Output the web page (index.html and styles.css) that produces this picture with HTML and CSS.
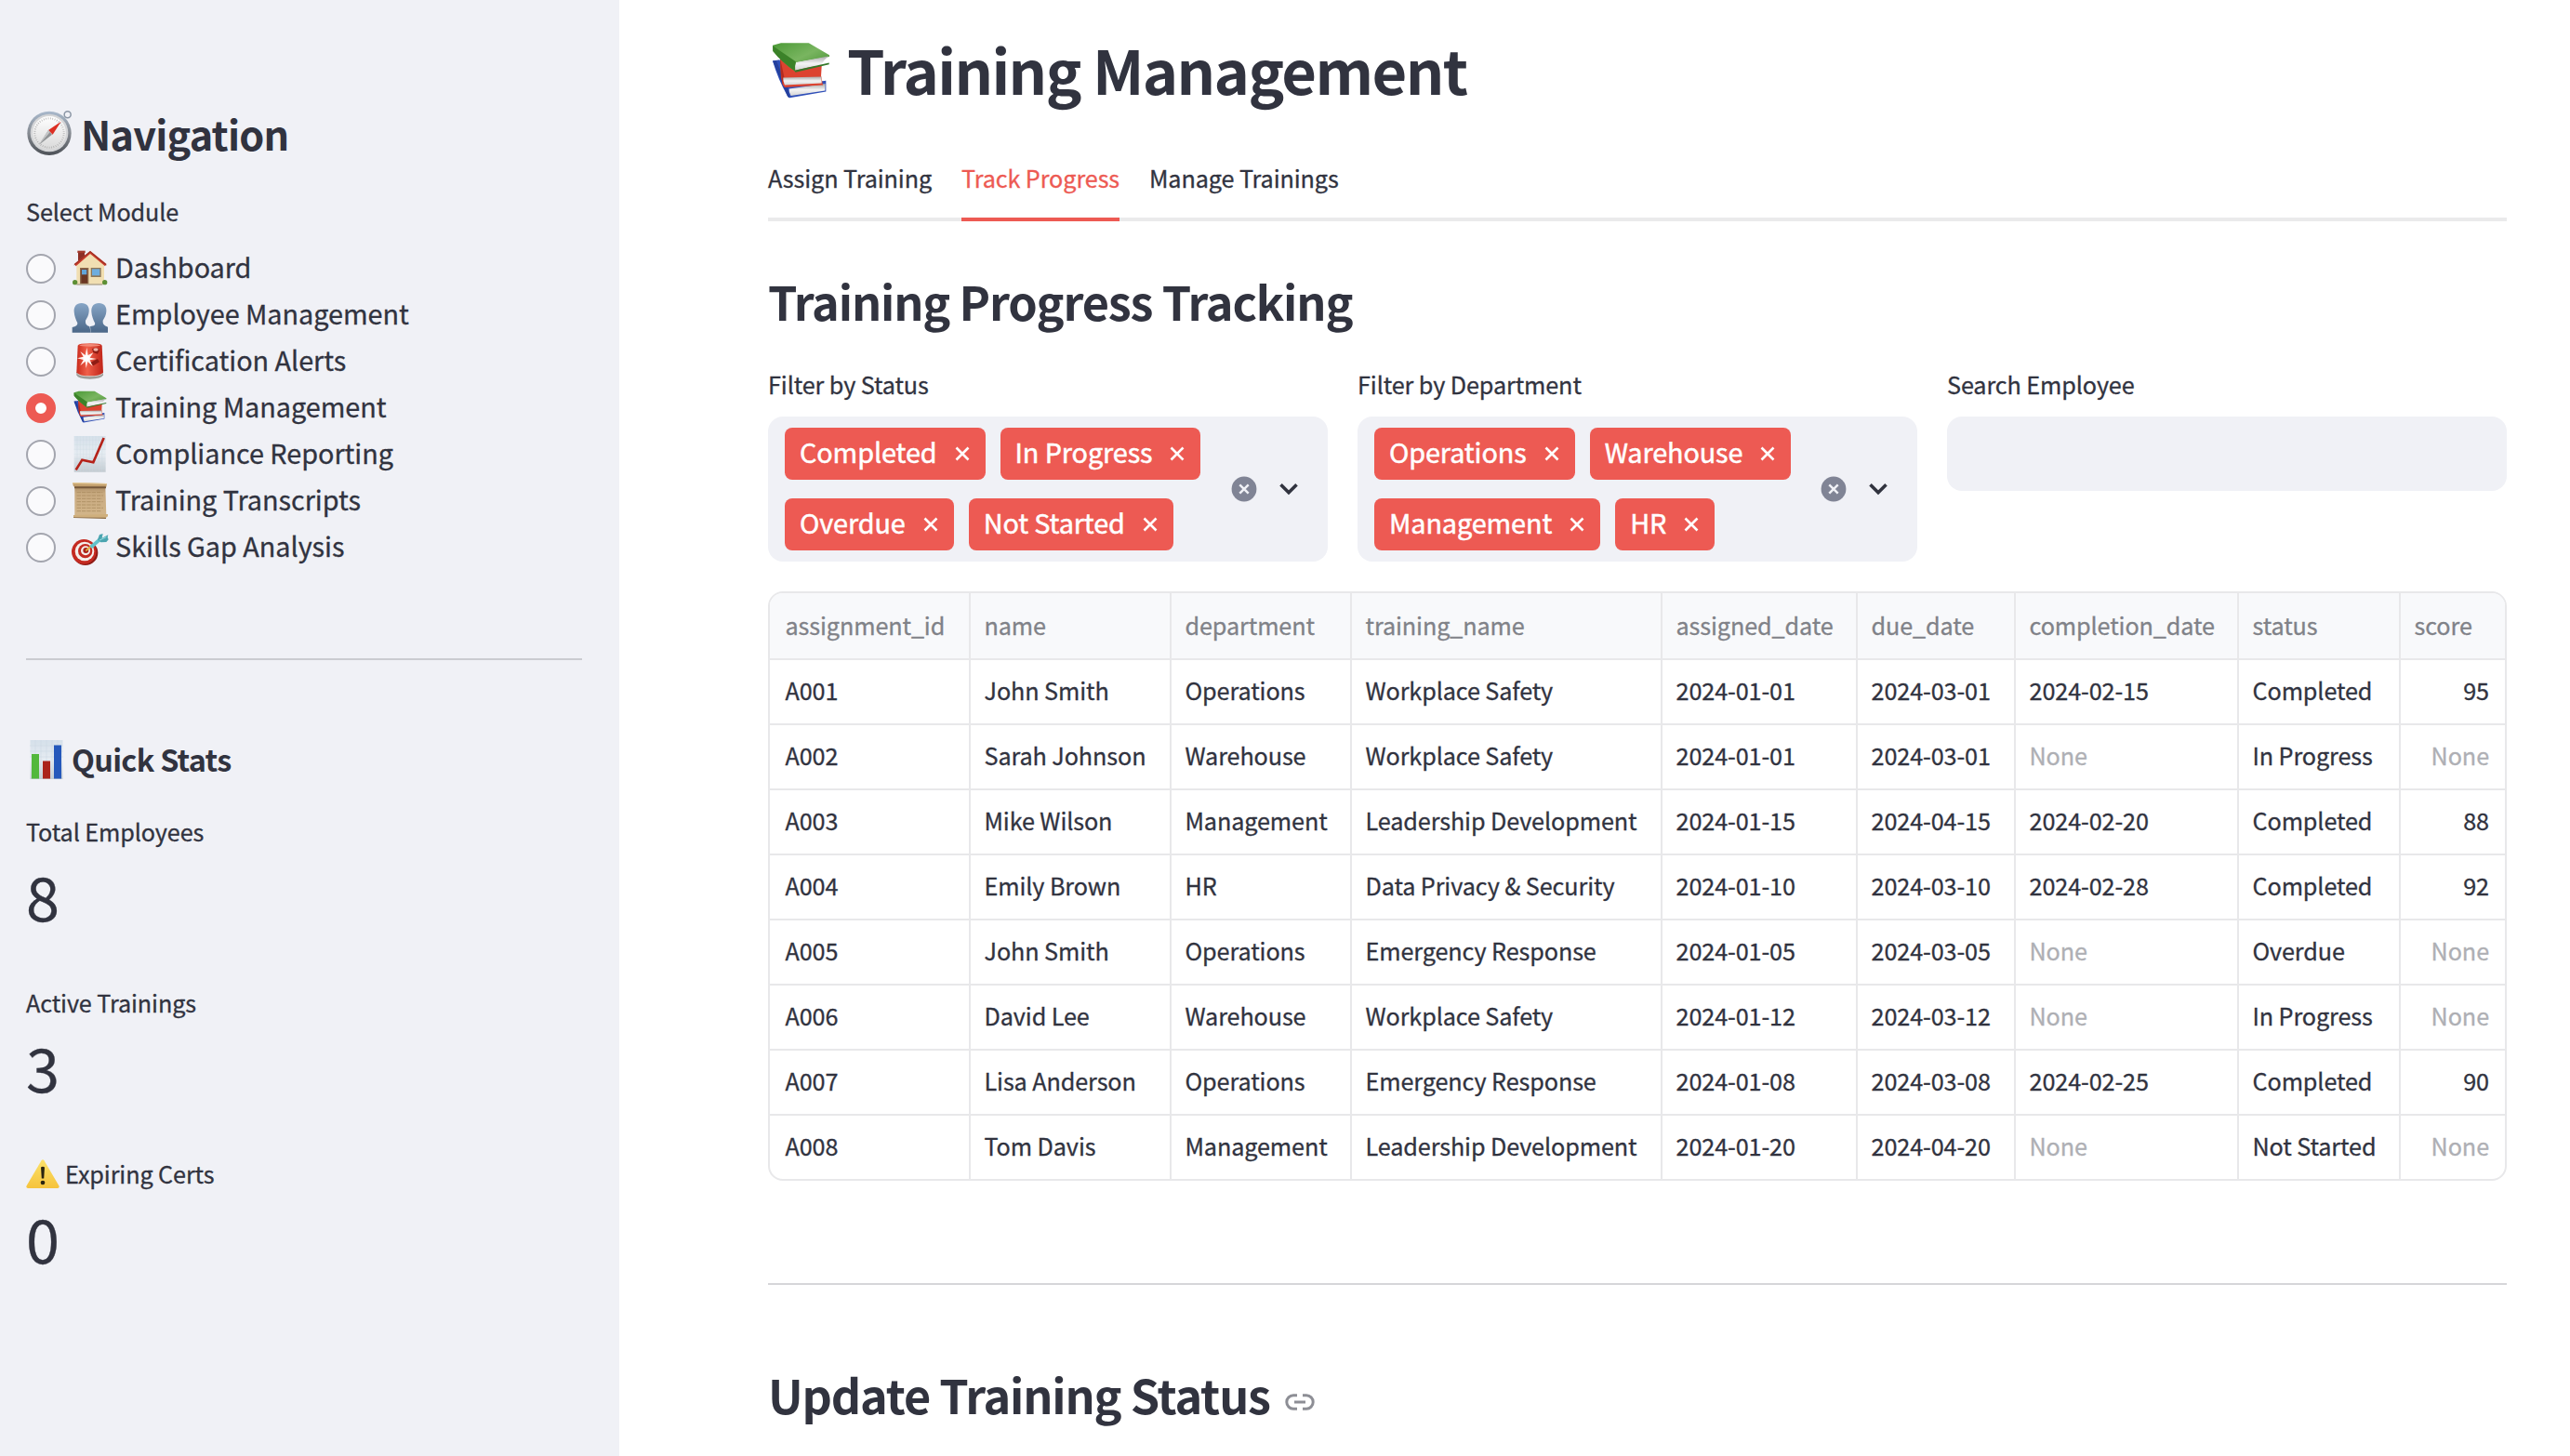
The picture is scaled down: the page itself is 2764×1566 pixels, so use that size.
FILE: index.html
```
<!DOCTYPE html>
<html lang="en">
<head>
<meta charset="utf-8">
<title>Training Management</title>
<link rel="stylesheet" href="styles.css">
</head>
<body>
<svg class="defs" width="0" height="0" aria-hidden="true">
  <defs>
    <linearGradient id="steel" x1="0" y1="0" x2="0" y2="1"><stop offset="0" stop-color="#a9b9cc"/><stop offset=".5" stop-color="#868b92"/><stop offset="1" stop-color="#4c5056"/></linearGradient>
    <linearGradient id="dial" x1="0" y1="0" x2="0" y2="1"><stop offset="0" stop-color="#fff"/><stop offset="1" stop-color="#d9d9d9"/></linearGradient>
    <linearGradient id="people" x1="0" y1="0" x2="0" y2="1"><stop offset="0" stop-color="#86a5c6"/><stop offset="1" stop-color="#4b6788"/></linearGradient>
    <linearGradient id="paper" x1="0" y1="0" x2="0" y2="1"><stop offset="0" stop-color="#d5e0ea"/><stop offset=".5" stop-color="#e6ecf2"/><stop offset="1" stop-color="#c3cbd1"/></linearGradient>
    <linearGradient id="green" x1="0" y1="0" x2="1" y2="1"><stop offset="0" stop-color="#4c9a37"/><stop offset=".5" stop-color="#79b560"/><stop offset="1" stop-color="#3f8b2c"/></linearGradient>
    <linearGradient id="pages" x1="0" y1="0" x2="0" y2="1"><stop offset="0" stop-color="#a8a8a8"/><stop offset=".5" stop-color="#f4f4f4"/><stop offset="1" stop-color="#d4d4d4"/></linearGradient>
    <linearGradient id="siren" x1="0" y1="0" x2="1" y2="0"><stop offset="0" stop-color="#c92a1c"/><stop offset=".4" stop-color="#f0604a"/><stop offset="1" stop-color="#bf2318"/></linearGradient>
    <linearGradient id="warn" x1="0" y1="0" x2="0" y2="1"><stop offset="0" stop-color="#fbe26b"/><stop offset="1" stop-color="#f6c33c"/></linearGradient>
    <linearGradient id="parchment" x1="0" y1="0" x2="0" y2="1"><stop offset="0" stop-color="#a98a62"/><stop offset=".25" stop-color="#c8aa80"/><stop offset="1" stop-color="#d2b58a"/></linearGradient>
    <symbol id="books" viewBox="30 44 190 184">
      <path d="M33 106 56 102 72 186 206 170 206 205 88 226 82 222Q50 165 33 106Z" fill="#2f4fb8"/>
      <path d="M86 196 204 180 203 202 92 219Q85 208 86 196Z" fill="url(#pages)"/>
      <path d="M33 106 82 222 88 226 82 190 44 104Z" fill="#24409c"/>
      <path d="M57 96 100 128 192 122 190 154 196 184 72 192 66 184 60 158Z" fill="#dc4330"/>
      <path d="M57 96 70 156 66 184Q58 150 57 96Z" fill="#b52a1e"/>
      <path d="M67 160 191 157 192 178 72 184Q66 172 67 160Z" fill="url(#pages)"/>
      <path d="M33 55 60 48H150L217 87V92L108 111 106 140Q64 110 34 74Z" fill="url(#green)"/>
      <path d="M33 57 108 108 106 140Q60 108 34 74Z" fill="#3b8229"/>
      <path d="M109 111 213 91Q198 104 192 117L106 137Q104 122 109 111Z" fill="url(#pages)"/>
      <path d="M104 137 216 112 216 117 107 143Z" fill="#35782a"/>
    </symbol>
    <symbol id="cross" viewBox="0 0 16 16"><path d="M1.5 1.5 14.5 14.5M14.5 1.5 1.5 14.5" fill="none" stroke="currentColor" stroke-width="2.6"/></symbol>
    <symbol id="clear" viewBox="0 0 28 28"><circle cx="14" cy="14" r="13.4" fill="#808495"/><path d="M9.3 9.3 18.7 18.7M18.7 9.3 9.3 18.7" stroke="#f0f1f6" stroke-width="2.5"/></symbol>
    <symbol id="chevron" viewBox="0 0 22 14"><path d="M2.5 2.2 11 10.8 19.5 2.2" fill="none" stroke="#31333f" stroke-width="3.6"/></symbol>
  </defs>
</svg>
<div class="app">
  <aside class="sidebar">
    <h2 class="nav-title">
      <svg class="compass" viewBox="24 56 150 150">
        <circle cx="158" cy="72" r="10.5" fill="none" stroke="#8b96a5" stroke-width="4.5"/>
        <circle cx="99" cy="132" r="71" fill="url(#steel)"/>
        <circle cx="99" cy="131" r="61" fill="#d4d5d7"/>
        <circle cx="99" cy="131" r="54" fill="url(#dial)"/>
        <circle cx="99" cy="131" r="47" fill="none" stroke="#a9a9a9" stroke-width="6" stroke-dasharray="2 5.2"/>
        <path d="M137 94 110 136 96 122Z" fill="#dc2f23"/>
        <path d="M66 169 96 122 108 136Z" fill="#8f9294"/>
        <path d="M66 169 96 122 101 129Z" fill="#c5c7c8"/>
      </svg>
      <span>Navigation</span>
    </h2>
    <div class="field-label">Select Module</div>
    <ul class="radios">
      <li><i class="radio"></i>
        <svg class="emoji" viewBox="172 27 120 120">
          <path d="M193 31H214V60H193Z" fill="#8d2f25"/><path d="M191 29H216V36H191Z" fill="#a33a2c"/>
          <path d="M188 72 232 33 277 72V138H188Z" fill="#f1dfb2"/>
          <path d="M232 29 285 72 280 79 232 39 186 79 180 72Z" fill="#c93b2b"/>
          <path d="M180 75 232 32 284 75" fill="none" stroke="#6e251d" stroke-width="2"/>
          <path d="M199 84H227V136H199Z" fill="#8e6b4c"/><path d="M203 88H223V134H203Z" fill="#6b3723"/><path d="M205 90H221V106H205Z" fill="#62a5d8"/>
          <path d="M234 84H267V114H234Z" fill="#8e7757"/><path d="M238 88H263V109H238Z" fill="#6eadde"/>
          <circle cx="183" cy="131" r="8" fill="#5d8f35"/><circle cx="279" cy="131" r="8" fill="#5d8f35"/>
          <path d="M188 136H272V140H188Z" fill="#aba18c"/>
        </svg>
        <span>Dashboard</span></li>
      <li><i class="radio"></i>
        <svg class="emoji" viewBox="172 177 120 120">
          <path d="M204 198C221 198 230 209 228 226C227 238 222 246 217 254C216 265 220 270 230 273L234 293H174V276Q192 273 191 262C186 252 181 240 180 226C179 209 187 198 204 198Z" fill="url(#people)"/>
          <path d="M260 198C277 198 286 209 284 226C283 238 278 246 273 254C272 265 276 270 289 275V293H234L232 273C246 272 249 268 247 262C242 252 237 240 236 226C235 209 243 198 260 198Z" fill="url(#people)"/>
        </svg>
        <span>Employee Management</span></li>
      <li><i class="radio"></i>
        <svg class="emoji" viewBox="172 327 120 120">
          <path d="M188 420H274V430Q268 443 231 443Q192 443 188 430Z" fill="#9b9b97"/>
          <path d="M190 419H273V426Q262 436 231 436Q198 436 190 426Z" fill="#d5d5d0"/>
          <path d="M192 335Q195 328 231 328Q268 328 270 335L274 422Q264 433 231 433Q198 433 188 422Z" fill="url(#siren)"/>
          <path d="M238 346Q256 338 262 350L256 362 242 358ZM232 390 256 378 262 388 242 400Z" fill="#8f1c14"/>
          <ellipse cx="250" cy="348" rx="8" ry="5" fill="#f3b3a8"/>
          <ellipse cx="231" cy="334" rx="34" ry="4" fill="#f28a78"/>
          <path d="M221 342 225 366 242 358 231 374 252 378 231 382 240 402 224 387 219 408 216 386 200 400 210 381 190 376 210 371 200 354 216 366Z" fill="#fff2ee"/>
          <circle cx="220" cy="376" r="10" fill="#fff"/>
        </svg>
        <span>Certification Alerts</span></li>
      <li><i class="radio checked"></i>
        <svg class="emoji books-small"><use href="#books"/></svg>
        <span>Training Management</span></li>
      <li><i class="radio"></i>
        <svg class="emoji" viewBox="172 27 120 120">
          <path d="M180 25H282V143H180Z" fill="url(#paper)"/>
          <path d="M190 25V143M200 25V143M210 25V143M220 25V143M230 25V143M240 25V143M250 25V143M260 25V143M270 25V143M180 40H282M180 55H282M180 70H282M180 85H282M180 100H282M180 115H282M180 130H282" stroke="#cbd7e2" stroke-width="1"/>
          <path d="M186 136 206 104 242 112 276 33" fill="none" stroke="#b52219" stroke-width="8"/>
        </svg>
        <span>Compliance Reporting</span></li>
      <li><i class="radio"></i>
        <svg class="emoji" viewBox="172 177 120 120">
          <path d="M182 188H281L284 284H182Z" fill="url(#parchment)"/>
          <path d="M189 209H272M189 219H274M189 229H270M189 239H273M189 249H269M189 259H274M189 269H266" stroke="#a58559" stroke-width="2" stroke-dasharray="13 3"/>
          <path d="M175 178 286 180 284 191 178 190Z" fill="#c29f6d"/><path d="M175 176 286 180V183L175 181Z" fill="#e2c795"/>
          <path d="M181 190H283V196H181Z" fill="#76583a"/>
          <path d="M178 282 289 279V286L282 291 178 290Z" fill="#cfaf7d"/><path d="M178 289 283 290V294L178 291Z" fill="#8b6a42"/>
        </svg>
        <span>Training Transcripts</span></li>
      <li><i class="radio"></i>
        <svg class="emoji" viewBox="172 327 120 120">
          <ellipse cx="216" cy="404" rx="41" ry="40" fill="#8d1a15"/>
          <ellipse cx="212" cy="400" rx="40" ry="40" fill="#c42a21"/>
          <ellipse cx="214" cy="399" rx="31" ry="31" fill="#f4efeb"/>
          <ellipse cx="216" cy="398" rx="23" ry="23" fill="#c42a21"/>
          <ellipse cx="217" cy="397" rx="15" ry="15" fill="#f4efeb"/>
          <ellipse cx="218" cy="396" rx="9" ry="9" fill="#a8221b"/>
          <path d="M218 397 240 378" stroke="#dfb63a" stroke-width="5"/>
          <path d="M230 382 258 358 265 367 238 390Z" fill="#62c3cc"/>
          <path d="M256 361 262 345 273 342 270 356 290 346 288 353 291 361 284 369 266 370Z" fill="#4ba5b0"/>
          <path d="M262 363 284 353" stroke="#94dde2" stroke-width="3"/>
        </svg>
        <span>Skills Gap Analysis</span></li>
    </ul>
    <hr class="side-rule">
    <h3 class="stats-title">
      <svg class="bars" viewBox="0 0 36 42">
        <path d="M.5 0H35.5V42H.5Z" fill="url(#paper)"/>
        <path d="M6 0V42M12 0V42M18 0V42M24 0V42M30 0V42M0 6H36M0 12H36M0 18H36" stroke="#c9d6e2" stroke-width=".5"/>
        <path d="M2 15H10V41.500H2Z" fill="#52b83c"/><path d="M14 22.500H22V41.500H14Z" fill="#ab231b"/><path d="M26 5.500H34V41.500H26Z" fill="#2558bb"/>
      </svg>
      <span>Quick Stats</span>
    </h3>
    <div class="metric"><div class="metric-label">Total Employees</div><div class="metric-value">8</div></div>
    <div class="metric"><div class="metric-label">Active Trainings</div><div class="metric-value">3</div></div>
    <div class="metric"><div class="metric-label">
      <svg class="warning" viewBox="0 0 36 31"><path d="M16.500 1.200Q18 -.8 19.500 1.200L35.500 28.500Q36 30.700 34 31H2Q0 30.700 .5 28.500Z" fill="url(#warn)"/><path d="M16 8.500Q18 6.800 20 8.500L19.200 20.500H16.800Z" fill="#2a2410"/><circle cx="18" cy="25" r="2.300" fill="#2a2410"/></svg>
      <span>Expiring Certs</span></div><div class="metric-value">0</div></div>
  </aside>
  <main class="main">
    <h1 class="page-title"><svg class="books-large"><use href="#books"/></svg><span>Training Management</span></h1>
    <nav class="tabs">
      <a class="tab">Assign Training</a><a class="tab active">Track Progress</a><a class="tab">Manage Trainings</a>
    </nav>
    <h2 class="section-title tracking">Training Progress Tracking</h2>
    <div class="filters">
      <div class="filter">
        <div class="field-label">Filter by Status</div>
        <div class="select">
          <div class="tags">
            <span class="tag"><b>Completed</b><svg><use href="#cross"/></svg></span>
            <span class="tag"><b>In Progress</b><svg><use href="#cross"/></svg></span>
            <span class="tag"><b>Overdue</b><svg><use href="#cross"/></svg></span>
            <span class="tag"><b>Not Started</b><svg><use href="#cross"/></svg></span>
          </div>
          <svg class="clear"><use href="#clear"/></svg><svg class="chevron"><use href="#chevron"/></svg>
        </div>
      </div>
      <div class="filter">
        <div class="field-label">Filter by Department</div>
        <div class="select">
          <div class="tags">
            <span class="tag"><b>Operations</b><svg><use href="#cross"/></svg></span>
            <span class="tag"><b>Warehouse</b><svg><use href="#cross"/></svg></span>
            <span class="tag"><b>Management</b><svg><use href="#cross"/></svg></span>
            <span class="tag"><b>HR</b><svg><use href="#cross"/></svg></span>
          </div>
          <svg class="clear"><use href="#clear"/></svg><svg class="chevron"><use href="#chevron"/></svg>
        </div>
      </div>
      <div class="filter">
        <div class="field-label">Search Employee</div>
        <div class="search"></div>
      </div>
    </div>
    <div class="grid">
      <div class="row head"><div>assignment_id</div><div>name</div><div>department</div><div>training_name</div><div>assigned_date</div><div>due_date</div><div>completion_date</div><div>status</div><div>score</div></div>
      <div class="row"><div>A001</div><div>John Smith</div><div>Operations</div><div>Workplace Safety</div><div>2024-01-01</div><div>2024-03-01</div><div>2024-02-15</div><div>Completed</div><div>95</div></div>
      <div class="row"><div>A002</div><div>Sarah Johnson</div><div>Warehouse</div><div>Workplace Safety</div><div>2024-01-01</div><div>2024-03-01</div><div class="none">None</div><div>In Progress</div><div class="none">None</div></div>
      <div class="row"><div>A003</div><div>Mike Wilson</div><div>Management</div><div>Leadership Development</div><div>2024-01-15</div><div>2024-04-15</div><div>2024-02-20</div><div>Completed</div><div>88</div></div>
      <div class="row"><div>A004</div><div>Emily Brown</div><div>HR</div><div>Data Privacy &amp; Security</div><div>2024-01-10</div><div>2024-03-10</div><div>2024-02-28</div><div>Completed</div><div>92</div></div>
      <div class="row"><div>A005</div><div>John Smith</div><div>Operations</div><div>Emergency Response</div><div>2024-01-05</div><div>2024-03-05</div><div class="none">None</div><div>Overdue</div><div class="none">None</div></div>
      <div class="row"><div>A006</div><div>David Lee</div><div>Warehouse</div><div>Workplace Safety</div><div>2024-01-12</div><div>2024-03-12</div><div class="none">None</div><div>In Progress</div><div class="none">None</div></div>
      <div class="row"><div>A007</div><div>Lisa Anderson</div><div>Operations</div><div>Emergency Response</div><div>2024-01-08</div><div>2024-03-08</div><div>2024-02-25</div><div>Completed</div><div>90</div></div>
      <div class="row"><div>A008</div><div>Tom Davis</div><div>Management</div><div>Leadership Development</div><div>2024-01-20</div><div>2024-04-20</div><div class="none">None</div><div>Not Started</div><div class="none">None</div></div>
    </div>
    <hr class="main-rule">
    <h2 class="section-title update">Update Training Status
      <svg class="link" viewBox="0 0 32 18"><path d="M13 1.800H9A7.200 7.200 0 0 0 9 16.200H13M19 1.800H23A7.200 7.200 0 0 1 23 16.200H19M10 9H22" fill="none" stroke="#8d8e95" stroke-width="3"/></svg>
    </h2>
  </main>
</div>
</body>
</html>
```
FILE: styles.css
```
* { box-sizing: border-box; }
body {
  margin: 0;
  background: #fff;
  color: #31333f;
  font-family: "Noto Sans CJK SC", "Noto Sans", sans-serif;
  font-size: 25.2px;
  line-height: 40px;
  letter-spacing: -0.1px;
  -webkit-text-stroke: 0.3px;
}
h1, h2, h3, ul { margin: 0; padding: 0; }
h1, h2, h3 { -webkit-text-stroke: 0; }
svg { display: block; flex: none; }
hr { border: 0; height: 2px; }
.defs { position: absolute; }
.app { display: flex; height: 1566px; overflow: hidden; }

.sidebar { width: 666px; flex: none; padding: 114px 40px 0 28px; background: #f0f1f6; }
.nav-title { display: flex; align-items: center; gap: 9px; height: 58px; font-size: 43.2px; line-height: 58px; letter-spacing: -0.019em; }
.compass { width: 50px; height: 50px; }
.sidebar .field-label { margin-top: 35px; }
.radios { margin-top: 17px; list-style: none; }
.radios li { display: flex; align-items: center; height: 50px; font-size: 28.8px; letter-spacing: -0.03px; }
.radios span { padding-bottom: 4px; }
.radio { width: 32px; height: 32px; flex: none; border: 2px solid #a3a5ae; border-radius: 50%; background: #fafafc; }
.radio.checked { border: 10px solid #ed5a53; background: #fff; }
.emoji { width: 40px; height: 40px; margin: 0 7px 0 17px; }
.books-small { width: 36px; height: 35px; margin: 0 9px 4px 19px; }
.side-rule { margin: 94px 0 84px; background: #cacbd0; }
.stats-title { display: flex; align-items: center; gap: 9px; margin: 0 0 36px 4px; height: 44px; font-size: 32.4px; line-height: 44px; letter-spacing: -0.022em; }
.bars { width: 36px; height: 42px; margin-top: 2px; }
.metric { margin-bottom: 44px; }
.metric-label { display: flex; align-items: center; gap: 6px; height: 40px; }
.warning { width: 36px; height: 31px; }
.metric-value { font-size: 64.8px; line-height: 99px; padding-bottom: 1px; }

.main { flex: 1; padding: 26px 68px 0 160px; }
.page-title { display: flex; align-items: center; height: 96px; font-size: 65px; line-height: 96px; letter-spacing: -0.025em; }
.books-large { width: 63px; height: 61px; margin: 2px 18px 0 4px; }
.tabs { display: flex; gap: 32px; margin-top: 49px; box-shadow: inset 0 -4px #eaeaeb; }
.tab { padding-bottom: 23px; border-bottom: 4px solid transparent; }
.tab.active { color: #ed5a53; border-color: #ed5a53; }
.section-title { font-size: 50.4px; line-height: 70px; letter-spacing: -0.023em; }
.tracking { margin-top: 51px; }
.filters { display: grid; grid-template-columns: repeat(3, 1fr); gap: 32px; margin-top: 34px; }
.select { display: flex; align-items: center; height: 156px; margin-top: 15px; padding: 0 31px 0 18px; border-radius: 16px; background: #f0f1f6; }
.tags { display: flex; flex: 1; flex-wrap: wrap; gap: 20px 16px; }
.tag { display: flex; align-items: center; gap: 19px; height: 56px; padding: 0 17px 0 16px; border-radius: 8px; background: #ed5a53; color: #fff; font-size: 28.8px; -webkit-text-stroke: 0.5px; }
.tag b { padding-bottom: 4px; font-weight: 400; }
.tag svg { width: 16px; height: 16px; }
.clear { width: 28px; height: 28px; margin-right: 23px; }
.chevron { width: 22px; height: 14px; }
.search { height: 80px; margin-top: 15px; border-radius: 16px; background: #f0f1f6; }

.grid { margin-top: 32px; border: 2px solid #e8e8ea; border-radius: 16px; overflow: hidden; }
.row { display: grid; grid-template-columns: 216px 216px 194px 334px 210px 170px 240px 174px 112px; height: 70px; line-height: 64px; border-bottom: 2px solid #e8e8ea; }
.row > div { padding: 0 16px 0 14.5px; border-right: 2px solid #e8e8ea; }
.row > div:first-child { padding-left: 16.5px; }
.row > div:last-child { padding-right: 17px; border-right: 0; text-align: right; }
.row:last-child { height: 68px; border-bottom: 0; }
.head { height: 72px; line-height: 68px; background: #f8f9fb; color: #808288; }
.row.head > div:last-child { text-align: left; }
.row .none { color: #aeafb4; }
.main-rule { margin: 110px 0 83px; background: #d6d6d9; }
.update { display: flex; align-items: center; gap: 16px; }
.link { width: 32px; height: 18px; margin-top: 16px; }
```
